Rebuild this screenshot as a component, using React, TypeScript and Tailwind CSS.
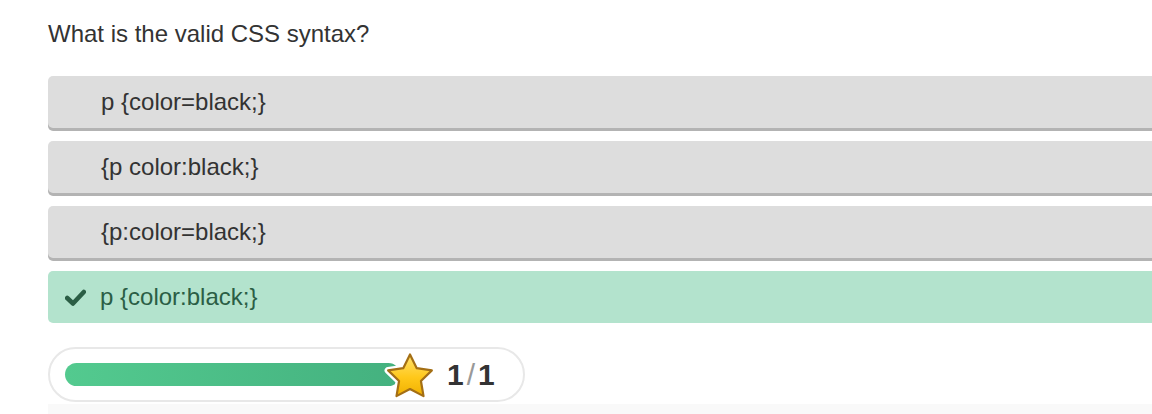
import React from "react";

function Star() {
  const pts =
    "26,4.5 32.76,18.2 47.87,20.39 36.94,31.05 39.52,46.11 26,39 12.48,46.11 15.06,31.05 4.13,20.39 19.24,18.2";
  return (
    <svg width="52" height="52" viewBox="0 0 52 52" className="shrink-0 -ml-[16px] mt-[3px] relative">
      <defs>
        <linearGradient id="sg" x1="0" y1="0" x2="0" y2="1">
          <stop offset="0" stopColor="#ffe270" />
          <stop offset="0.55" stopColor="#ffc81a" />
          <stop offset="1" stopColor="#f0b000" />
        </linearGradient>
      </defs>
      <polygon points={pts} fill="#fff" stroke="#fff" strokeWidth="7" strokeLinejoin="round" />
      <polygon points={pts} fill="url(#sg)" stroke="#a46f15" strokeWidth="2.2" strokeLinejoin="round" />
    </svg>
  );
}

function Option({ text, correct }: { text: string; correct?: boolean }) {
  if (correct) {
    return (
      <div className="h-[52px] rounded-[5px] bg-[#b3e3cd] flex items-center text-[#2b5e45] text-[24px]">
        <svg width="21" height="17" viewBox="0 0 21 17" className="ml-[17px] mr-[14px]">
          <path d="M2.2 9 L8 14.5 L18.8 3" fill="none" stroke="#2b5e45" strokeWidth="4.6" strokeLinecap="round" strokeLinejoin="round" />
        </svg>
        <span>{text}</span>
      </div>
    );
  }
  return (
    <div className="h-[52px] rounded-[5px] bg-[#dddddd] shadow-[0_3px_0_#b3b3b3] flex items-center pl-[53px] text-[#333] text-[24px]">
      {text}
    </div>
  );
}

export default function App() {
  return (
    <div
      className="w-[1152px] h-[414px] bg-white overflow-hidden"
      style={{ fontFamily: '"Liberation Sans", Arial, sans-serif' }}
    >
      <div className="pl-[48px]">
        <div className="pt-[21px] text-[24px] leading-[26px] text-[#333]">What is the valid CSS syntax?</div>
        <div className="mt-[29px] flex flex-col gap-[13px] -mr-[20px]">
          <Option text="p {color=black;}" />
          <Option text="{p color:black;}" />
          <Option text="{p:color=black;}" />
          <Option text="p {color:black;}" correct />
        </div>
        <div className="mt-[24px] w-[477px] h-[55px] rounded-full border-2 border-[#e8e8e8] flex items-center pl-[15px]">
          <div className="w-[335px] h-[23px] rounded-full bg-linear-to-r from-[#53ca8f] to-[#44b17f]" />
          <Star />
          <div className="ml-[11px] text-[30px] font-bold text-[#333] leading-none flex items-center">
            <span>1</span>
            <span className="text-[#999] font-normal mx-[3px]">/</span>
            <span>1</span>
          </div>
        </div>
        <div className="mt-[2px] h-[12px] bg-[#f9f9f9]" />
      </div>
    </div>
  );
}
